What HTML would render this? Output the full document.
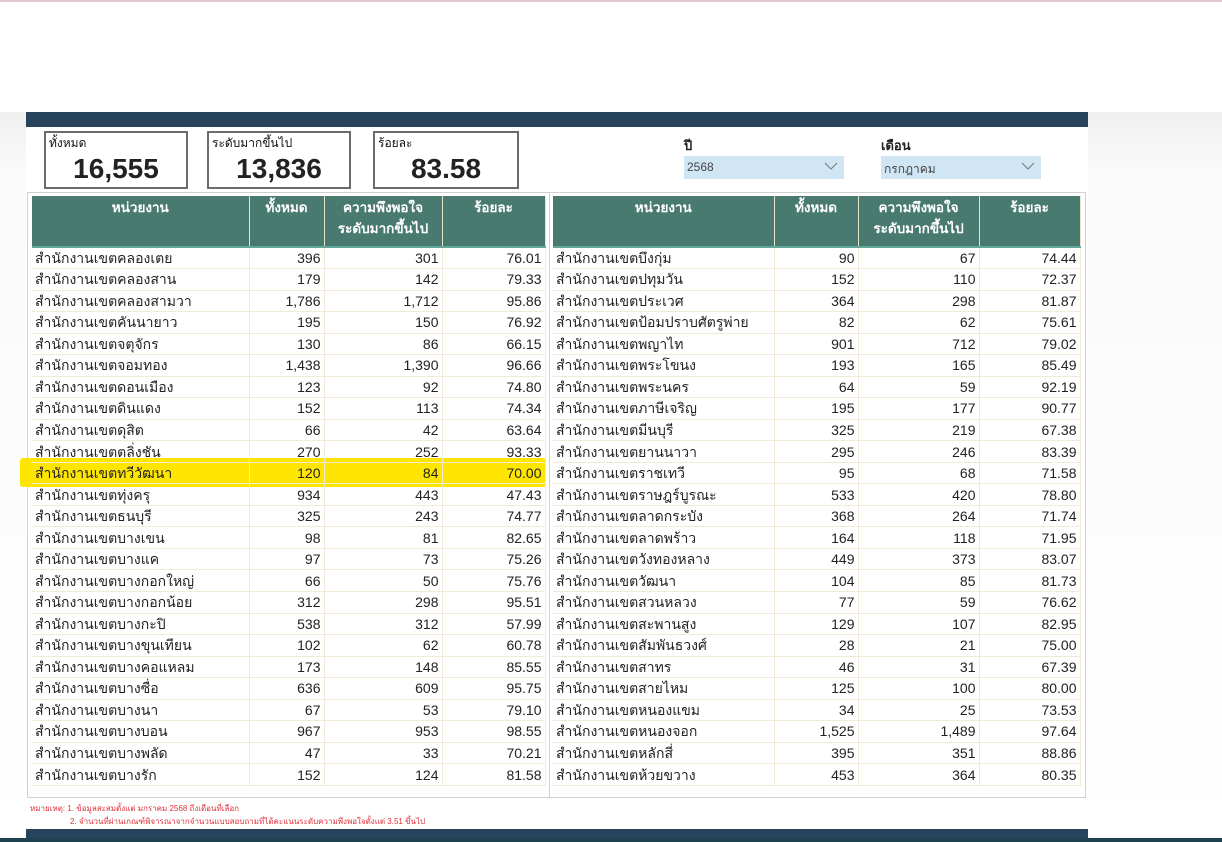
<!DOCTYPE html>
<html><head><meta charset="utf-8"><style>
*{margin:0;padding:0;box-sizing:border-box}
body{width:1222px;height:842px;overflow:hidden;background:#fff;font-family:"Liberation Sans","DejaVu Sans",sans-serif;position:relative}
.abs{position:absolute}
.banner{background:#27445c}
.kpi{position:absolute;border:2px solid #6b6b6b;background:#fff;height:58px;top:131px}
.kpi .l{position:absolute;left:3px;top:1px;font-size:12px;color:#111}
.kpi .v{position:absolute;left:0;right:0;top:20px;text-align:center;font-size:28px;font-weight:bold;color:#222}
.sl{position:absolute;font-size:13px;font-weight:bold;color:#222;top:135px}
.dd{position:absolute;top:156px;height:23px;width:160px;background:#d0e6f5;font-size:12px;color:#444;padding:4px 3px}
.dd svg{position:absolute;right:6px;top:6px}
table{position:absolute;border-collapse:collapse;font-size:14px;color:#222;top:196px;table-layout:fixed}
th{background:#497a70;color:#fff;font-weight:bold;font-size:13.5px;height:51px;vertical-align:top;padding-top:1px;border-right:1px solid #e8e2cc;border-bottom:2px solid #62a89a;line-height:21px;text-align:center}
td{height:21.54px;border-bottom:1px solid #f0ead6;border-right:1px solid #f0ead6;padding:0 3px;white-space:nowrap;text-align:right;line-height:20px}
td:first-child{text-align:left}
</style></head><body>
<div class="abs" style="left:0;top:112px;width:1222px;height:730px;background:linear-gradient(#f0f0f0,#fafafa 60px,#fff)"></div>
<div class="abs" style="left:26px;top:112px;width:1062px;height:730px;background:#fff"></div>
<div class="abs banner" style="left:26px;top:100px;width:1062px;height:27px"></div>
<div class="abs" style="left:0;top:0;width:1222px;height:112px;background:#fff;border-top:2px solid #e3c4cf"></div>

<div class="kpi" style="left:44px;width:144px"><div class="l">ทั้งหมด</div><div class="v">16,555</div></div>
<div class="kpi" style="left:207px;width:144px"><div class="l">ระดับมากขึ้นไป</div><div class="v">13,836</div></div>
<div class="kpi" style="left:373px;width:146px"><div class="l">ร้อยละ</div><div class="v">83.58</div></div>

<div class="sl" style="left:684px">ปี</div>
<div class="dd" style="left:684px">2568<svg width="14" height="9"><path d="M1 1l6 6 6-6" fill="none" stroke="#777"/></svg></div>
<div class="sl" style="left:881px">เดือน</div>
<div class="dd" style="left:881px">กรกฎาคม<svg width="14" height="9"><path d="M1 1l6 6 6-6" fill="none" stroke="#777"/></svg></div>

<div class="abs" style="left:27px;top:192px;width:1059px;height:606px;border:1px solid #d0d0d0"></div>
<div class="abs" style="left:549px;top:193px;width:1px;height:604px;background:#d0d0d0"></div>
<div class="abs" style="left:20px;top:458px;width:526px;height:29px;background:#ffe600;border-radius:3px"></div>

<table style="left:32px;width:513px">
<colgroup><col style="width:217px"><col style="width:75px"><col style="width:118px"><col style="width:103px"></colgroup>
<tr><th>หน่วยงาน</th><th>ทั้งหมด</th><th>ความพึงพอใจ<br>ระดับมากขึ้นไป</th><th>ร้อยละ</th></tr>
<tr><td>สำนักงานเขตคลองเตย</td><td>396</td><td>301</td><td>76.01</td></tr>
<tr><td>สำนักงานเขตคลองสาน</td><td>179</td><td>142</td><td>79.33</td></tr>
<tr><td>สำนักงานเขตคลองสามวา</td><td>1,786</td><td>1,712</td><td>95.86</td></tr>
<tr><td>สำนักงานเขตคันนายาว</td><td>195</td><td>150</td><td>76.92</td></tr>
<tr><td>สำนักงานเขตจตุจักร</td><td>130</td><td>86</td><td>66.15</td></tr>
<tr><td>สำนักงานเขตจอมทอง</td><td>1,438</td><td>1,390</td><td>96.66</td></tr>
<tr><td>สำนักงานเขตดอนเมือง</td><td>123</td><td>92</td><td>74.80</td></tr>
<tr><td>สำนักงานเขตดินแดง</td><td>152</td><td>113</td><td>74.34</td></tr>
<tr><td>สำนักงานเขตดุสิต</td><td>66</td><td>42</td><td>63.64</td></tr>
<tr><td>สำนักงานเขตตลิ่งชัน</td><td>270</td><td>252</td><td>93.33</td></tr>
<tr><td>สำนักงานเขตทวีวัฒนา</td><td>120</td><td>84</td><td>70.00</td></tr>
<tr><td>สำนักงานเขตทุ่งครุ</td><td>934</td><td>443</td><td>47.43</td></tr>
<tr><td>สำนักงานเขตธนบุรี</td><td>325</td><td>243</td><td>74.77</td></tr>
<tr><td>สำนักงานเขตบางเขน</td><td>98</td><td>81</td><td>82.65</td></tr>
<tr><td>สำนักงานเขตบางแค</td><td>97</td><td>73</td><td>75.26</td></tr>
<tr><td>สำนักงานเขตบางกอกใหญ่</td><td>66</td><td>50</td><td>75.76</td></tr>
<tr><td>สำนักงานเขตบางกอกน้อย</td><td>312</td><td>298</td><td>95.51</td></tr>
<tr><td>สำนักงานเขตบางกะปิ</td><td>538</td><td>312</td><td>57.99</td></tr>
<tr><td>สำนักงานเขตบางขุนเทียน</td><td>102</td><td>62</td><td>60.78</td></tr>
<tr><td>สำนักงานเขตบางคอแหลม</td><td>173</td><td>148</td><td>85.55</td></tr>
<tr><td>สำนักงานเขตบางซื่อ</td><td>636</td><td>609</td><td>95.75</td></tr>
<tr><td>สำนักงานเขตบางนา</td><td>67</td><td>53</td><td>79.10</td></tr>
<tr><td>สำนักงานเขตบางบอน</td><td>967</td><td>953</td><td>98.55</td></tr>
<tr><td>สำนักงานเขตบางพลัด</td><td>47</td><td>33</td><td>70.21</td></tr>
<tr><td>สำนักงานเขตบางรัก</td><td>152</td><td>124</td><td>81.58</td></tr>
</table>

<table style="left:553px;width:527px">
<colgroup><col style="width:221px"><col style="width:84px"><col style="width:121px"><col style="width:101px"></colgroup>
<tr><th>หน่วยงาน</th><th>ทั้งหมด</th><th>ความพึงพอใจ<br>ระดับมากขึ้นไป</th><th>ร้อยละ</th></tr>
<tr><td>สำนักงานเขตบึงกุ่ม</td><td>90</td><td>67</td><td>74.44</td></tr>
<tr><td>สำนักงานเขตปทุมวัน</td><td>152</td><td>110</td><td>72.37</td></tr>
<tr><td>สำนักงานเขตประเวศ</td><td>364</td><td>298</td><td>81.87</td></tr>
<tr><td>สำนักงานเขตป้อมปราบศัตรูพ่าย</td><td>82</td><td>62</td><td>75.61</td></tr>
<tr><td>สำนักงานเขตพญาไท</td><td>901</td><td>712</td><td>79.02</td></tr>
<tr><td>สำนักงานเขตพระโขนง</td><td>193</td><td>165</td><td>85.49</td></tr>
<tr><td>สำนักงานเขตพระนคร</td><td>64</td><td>59</td><td>92.19</td></tr>
<tr><td>สำนักงานเขตภาษีเจริญ</td><td>195</td><td>177</td><td>90.77</td></tr>
<tr><td>สำนักงานเขตมีนบุรี</td><td>325</td><td>219</td><td>67.38</td></tr>
<tr><td>สำนักงานเขตยานนาวา</td><td>295</td><td>246</td><td>83.39</td></tr>
<tr><td>สำนักงานเขตราชเทวี</td><td>95</td><td>68</td><td>71.58</td></tr>
<tr><td>สำนักงานเขตราษฎร์บูรณะ</td><td>533</td><td>420</td><td>78.80</td></tr>
<tr><td>สำนักงานเขตลาดกระบัง</td><td>368</td><td>264</td><td>71.74</td></tr>
<tr><td>สำนักงานเขตลาดพร้าว</td><td>164</td><td>118</td><td>71.95</td></tr>
<tr><td>สำนักงานเขตวังทองหลาง</td><td>449</td><td>373</td><td>83.07</td></tr>
<tr><td>สำนักงานเขตวัฒนา</td><td>104</td><td>85</td><td>81.73</td></tr>
<tr><td>สำนักงานเขตสวนหลวง</td><td>77</td><td>59</td><td>76.62</td></tr>
<tr><td>สำนักงานเขตสะพานสูง</td><td>129</td><td>107</td><td>82.95</td></tr>
<tr><td>สำนักงานเขตสัมพันธวงศ์</td><td>28</td><td>21</td><td>75.00</td></tr>
<tr><td>สำนักงานเขตสาทร</td><td>46</td><td>31</td><td>67.39</td></tr>
<tr><td>สำนักงานเขตสายไหม</td><td>125</td><td>100</td><td>80.00</td></tr>
<tr><td>สำนักงานเขตหนองแขม</td><td>34</td><td>25</td><td>73.53</td></tr>
<tr><td>สำนักงานเขตหนองจอก</td><td>1,525</td><td>1,489</td><td>97.64</td></tr>
<tr><td>สำนักงานเขตหลักสี่</td><td>395</td><td>351</td><td>88.86</td></tr>
<tr><td>สำนักงานเขตห้วยขวาง</td><td>453</td><td>364</td><td>80.35</td></tr>
</table>

<div class="abs" style="left:30px;top:802px;font-size:8px;color:#e0303a;line-height:13px">หมายเหตุ: 1. ข้อมูลสะสมตั้งแต่ มกราคม 2568 ถึงเดือนที่เลือก<br><span style="padding-left:40px">2. จำนวนที่ผ่านเกณฑ์พิจารณาจากจำนวนแบบสอบถามที่ได้คะแนนระดับความพึงพอใจตั้งแต่ 3.51 ขึ้นไป</span></div>
<div class="abs banner" style="left:26px;top:829px;width:1062px;height:13px"></div>
<div class="abs" style="left:0;top:838px;width:1222px;height:4px;background:#1f4150"></div>
</body></html>
